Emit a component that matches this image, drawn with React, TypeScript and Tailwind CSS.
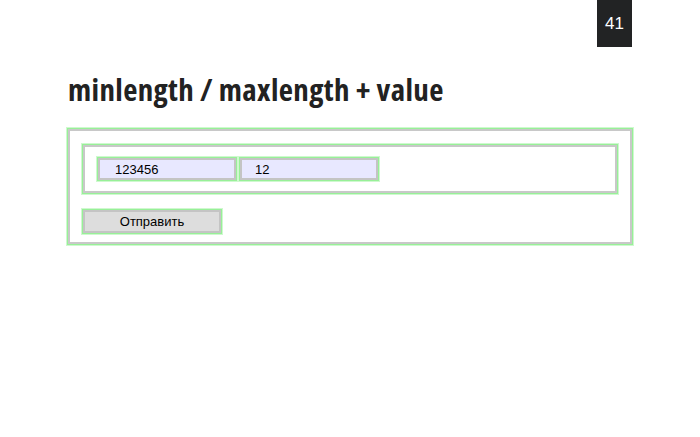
export default function App() {
  return (
    <div className="relative w-[700px] h-[437px] bg-white overflow-hidden font-['Liberation_Sans',Arial,sans-serif]">
      {/* slide number */}
      <div className="absolute top-0 left-[597px] w-[35px] h-[47px] bg-[#222324] text-white text-[17px] flex items-center justify-center">
        41
      </div>

      <div className="pt-[69px] pl-[68px]">
        <h1 className="font-['Open_Sans',sans-serif] [font-stretch:condensed] font-bold text-[31px] leading-[40px] text-[#222] tracking-[0.35px]">
          minlength / maxlength + value
        </h1>

        <form className="mt-[20px] w-[564px] border-2 border-[#c8c8c8] shadow-[0_0_0_1px_#98f098,0_0_0_2px_#cff8cf] px-[13px] pt-[14px] pb-[9px]">
          <div className="border-2 border-[#c8c8c8] shadow-[0_0_0_1px_#98f098,0_0_0_2px_#cff8cf] px-[13px] py-[11px] flex gap-[4px]">
            <input
              defaultValue="123456"
              className="w-[138px] h-[22px] bg-[#e8e8ff] border-2 border-[#c4c4c4] shadow-[0_0_0_1px_#98f098,0_0_0_2px_#cff8cf] pl-[15px] text-[13px] text-black outline-none"
            />
            <input
              defaultValue="12"
              className="w-[138px] h-[22px] bg-[#e8e8ff] border-2 border-[#c4c4c4] shadow-[0_0_0_1px_#98f098,0_0_0_2px_#cff8cf] pl-[13px] text-[13px] text-black outline-none"
            />
          </div>
          <button
            type="button"
            className="mt-[17px] w-[138px] h-[23px] bg-[#dddddd] border-2 border-[#c4c4c4] shadow-[0_0_0_1px_#98f098,0_0_0_2px_#cff8cf] text-[13px] text-black flex items-center justify-center"
          >
            Отправить
          </button>
        </form>
      </div>
    </div>
  );
}
